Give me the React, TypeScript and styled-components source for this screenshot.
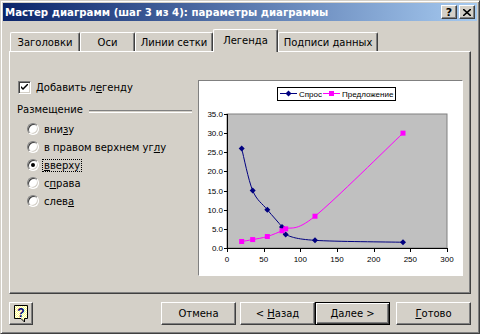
import styled, { createGlobalStyle } from "styled-components";

const Global = createGlobalStyle`
	html, body { margin: 0; padding: 0; background: #d4d0c8; }
	body { font-family: "DejaVu Sans", "Liberation Sans", sans-serif; font-size: 10px; color: #000; }
`;

const Window = styled.div`
	width: 480px;
	height: 334px;
	box-sizing: border-box;
	background: #d4d0c8;
	border: 1px solid;
	border-color: #d4d0c8 #404040 #404040 #d4d0c8;
	box-shadow: inset 1px 1px #fff, inset -1px -1px #808080;
	padding: 2px;
	display: flex;
	flex-direction: column;
`;
const TitleBar = styled.div`
	height: 18px;
	display: flex;
	align-items: center;
	padding: 0 2px 0 2px;
	background: linear-gradient(to right, #0a246a, #a6caf0);
`;
const TitleText = styled.div`
	flex: 1;
	color: #fff;
	font-weight: bold;
	font-size: 10.2px;
	white-space: nowrap;
`;
const CapBtn = styled.div<{ $gap?: number }>`
	width: 16px;
	height: 14px;
	box-sizing: border-box;
	margin-left: ${(p) => p.$gap ?? 0}px;
	background: #d4d0c8;
	border: 1px solid;
	border-color: #fff #404040 #404040 #fff;
	box-shadow: inset -1px -1px #808080;
	display: flex;
	align-items: center;
	justify-content: center;
	font-weight: bold;
	font-size: 11px;
	line-height: 1;
`;
const Body = styled.div`
	flex: 1;
	display: flex;
	flex-direction: column;
	padding: 8px 6px 0 6px;
`;
const TabStrip = styled.div`
	height: 22px;
	display: flex;
	align-items: flex-end;
	padding-left: 1px;
`;
const Tab = styled.div<{ $w: number; $active?: boolean }>`
	width: ${(p) => p.$w}px;
	height: ${(p) => (p.$active ? 23 : 19)}px;
	margin-bottom: ${(p) => (p.$active ? -1 : 0)}px;
	position: relative;
	z-index: ${(p) => (p.$active ? 1 : 0)};
	box-sizing: border-box;
	background: #d4d0c8;
	border-top: 1px solid #fff;
	border-left: 1px solid #fff;
	border-right: 1px solid #404040;
	border-radius: 2px 2px 0 0;
	box-shadow: inset -1px 0 #808080;
	display: flex;
	justify-content: center;
	padding-top: ${(p) => (p.$active ? 5 : 4)}px;
	white-space: nowrap;
`;
const Panel = styled.div`
	height: 243px;
	box-sizing: border-box;
	border: 1px solid;
	border-color: #fff #404040 #404040 #fff;
	box-shadow: inset -1px -1px #808080;
	display: flex;
	padding: 28px 0 0 7px;
	gap: 6px;
`;
const LeftCol = styled.div`
	width: 175px;
	padding-top: 1px;
	display: flex;
	flex-direction: column;
`;
const CheckRow = styled.div`
	height: 13px;
	display: flex;
	align-items: center;
	gap: 4px;
	padding-left: 1px;
`;
const CheckBox = styled.div`
	width: 13px;
	height: 13px;
	box-sizing: border-box;
	background: #fff;
	border: 1px solid;
	border-color: #808080 #fff #fff #808080;
	box-shadow: inset 1px 1px #404040, inset -1px -1px #d4d0c8;
	display: flex;
	align-items: center;
	justify-content: center;
`;
const GroupHead = styled.div`
	height: 13px;
	margin-top: 9px;
	display: flex;
	align-items: center;
	gap: 6px;
`;
const Etched = styled.div`
	flex: 1;
	height: 1px;
	margin-top: 3px;
	border-top: 1px solid #808080;
	border-bottom: 1px solid #fff;
`;
const RadioList = styled.div`
	margin-top: 4px;
	padding-left: 10px;
	display: flex;
	flex-direction: column;
`;
const RadioRow = styled.div`
	height: 18px;
	display: flex;
	align-items: center;
	gap: 4px;
`;
const Radio = styled.div<{ $on?: boolean }>`
	width: 12px;
	height: 12px;
	box-sizing: border-box;
	border-radius: 50%;
	background: #fff;
	border: 1px solid;
	border-color: #808080 #fff #fff #808080;
	box-shadow: inset 1px 1px #404040, inset -1px -1px #d4d0c8;
	display: flex;
	align-items: center;
	justify-content: center;
	&::after {
		content: "";
		display: ${(p) => (p.$on ? "block" : "none")};
		width: 4px;
		height: 4px;
		border-radius: 50%;
		background: #000;
	}
`;
const Label = styled.span<{ $focus?: boolean }>`
	white-space: pre;
	padding: 0 1px;
	outline: ${(p) => (p.$focus ? "1px dotted #000" : "none")};
	u { text-decoration: underline; text-underline-offset: 1px; }
`;
const ChartFrame = styled.div`
	width: 263px;
	height: 194px;
	border: 1px solid;
	border-color: #808080 #fff #fff #808080;
	background: #fff;
`;
const Footer = styled.div`
	display: flex;
	align-items: flex-start;
	margin-top: 8px;
`;
const Button = styled.div<{ $w?: number; $gap?: number; $default?: boolean }>`
	width: ${(p) => p.$w ?? 75}px;
	height: 23px;
	margin-left: ${(p) => p.$gap ?? 0}px;
	box-sizing: border-box;
	background: #d4d0c8;
	border: 1px solid;
	border-color: ${(p) => (p.$default ? "#000" : "#fff #404040 #404040 #fff")};
	box-shadow: ${(p) =>
		p.$default
			? "inset 1px 1px #fff, inset -1px -1px #404040, inset -2px -2px #808080"
			: "inset -1px -1px #808080"};
	display: flex;
	align-items: center;
	justify-content: center;
	white-space: pre;
	u { text-decoration: underline; text-underline-offset: 1px; }
`;
const Spacer = styled.div`
	flex: 1;
`;

// --- chart ---------------------------------------------------------------
const PX = 28, PY = 33, PW = 220, PH = 134;
const sx = (v: number) => PX + (v * PW) / 300;
const sy = (v: number) => PY + PH - (v * PH) / 35;

const demand: [number, number][] = [[20, 26], [35, 15], [55, 10], [75, 5.5], [80, 3.5], [120, 2], [240, 1.5]];
const supply: [number, number][] = [[20, 1.7], [35, 2.2], [55, 3], [75, 4.5], [80, 5], [120, 8.3], [240, 30]];

const smooth = (data: [number, number][]) => {
	const p = data.map(([x, y]) => [sx(x), sy(y)]);
	let d = `M${p[0][0]},${p[0][1]}`;
	for (let i = 0; i < p.length - 1; i++) {
		const a = p[i - 1] || p[i];
		const b = p[i];
		const c = p[i + 1];
		const e = p[i + 2] || c;
		const t = 1 / 6;
		d += ` C${b[0] + (c[0] - a[0]) * t},${b[1] + (c[1] - a[1]) * t} ${c[0] - (e[0] - b[0]) * t},${c[1] - (e[1] - b[1]) * t} ${c[0]},${c[1]}`;
	}
	return d;
};

const NAVY = "#000080";
const PINK = "#ff00ff";

const Diamond = ({ x, y }: { x: number; y: number }) => (
	<polygon points={`${x},${y - 3} ${x + 3},${y} ${x},${y + 3} ${x - 3},${y}`} fill={NAVY} />
);
const Square = ({ x, y }: { x: number; y: number }) => (
	<rect x={x - 2.5} y={y - 2.5} width={5} height={5} fill={PINK} />
);

const Chart = () => (
	<svg width={263} height={194} style={{ display: "block" }} fontFamily="Liberation Sans, sans-serif" fontSize={8}>
		<rect x={78.5} y={6.5} width={118} height={13} fill="#fff" stroke="#000" />
		<line x1={81} x2={98} y1={12.5} y2={12.5} stroke={NAVY} />
		<Diamond x={89.5} y={12.5} />
		<text x={100} y={15.5}>Спрос</text>
		<line x1={124} x2={141} y1={12.5} y2={12.5} stroke={PINK} />
		<Square x={132.5} y={12.5} />
		<text x={143} y={15.5}>Предложение</text>

		<rect x={PX} y={PY} width={PW} height={PH} fill="#c0c0c0" stroke="#808080" />
		<line x1={PX + 0.5} x2={PX + 0.5} y1={PY} y2={PY + PH + 0.5} stroke="#000" />
		<line x1={PX} x2={PX + PW + 0.5} y1={PY + PH + 0.5} y2={PY + PH + 0.5} stroke="#000" />
		{[0, 5, 10, 15, 20, 25, 30, 35].map((v) => (
			<g key={v}>
				<line x1={PX - 3} x2={PX} y1={Math.round(sy(v)) + 0.5} y2={Math.round(sy(v)) + 0.5} stroke="#000" />
				<text x={24} y={Math.round(sy(v)) + 3} textAnchor="end">{v.toFixed(1)}</text>
			</g>
		))}
		{[0, 50, 100, 150, 200, 250, 300].map((v) => (
			<g key={v}>
				<line x1={Math.round(sx(v)) + 0.5} x2={Math.round(sx(v)) + 0.5} y1={PY + PH} y2={PY + PH + 4} stroke="#000" />
				<text x={sx(v)} y={181} textAnchor="middle">{v}</text>
			</g>
		))}
		<path d={smooth(demand)} fill="none" stroke={NAVY} />
		<path d={smooth(supply)} fill="none" stroke={PINK} />
		{demand.map(([x, y]) => <Diamond key={x} x={sx(x)} y={sy(y)} />)}
		{supply.map(([x, y]) => <Square key={x} x={sx(x)} y={sy(y)} />)}
	</svg>
);

const HelpIcon = () => (
	<svg width={14} height={18} viewBox="0 0 14 18">
		<defs>
			<pattern id="dots" width={2} height={2} patternUnits="userSpaceOnUse">
				<rect width={2} height={2} fill="#ffff80" />
				<rect width={1} height={1} fill="#fff" />
				<rect x={1} y={1} width={1} height={1} fill="#fff" />
			</pattern>
		</defs>
		<path d="M0.5,0.5 H13.5 V13.5 H10.5 L10.5,17 L7,13.5 H0.5 Z" fill="url(#dots)" stroke="#000" />
		<text x={7} y={11.5} textAnchor="middle" fontWeight="bold" fontSize={12} fill={NAVY} fontFamily="Liberation Sans, sans-serif">?</text>
	</svg>
);

const tabs = [
	{ t: "Заголовки", w: 70 },
	{ t: "Оси", w: 55 },
	{ t: "Линии сетки", w: 78 },
	{ t: "Легенда", w: 65, active: true },
	{ t: "Подписи данных", w: 100 },
];

const App = () => (
	<>
		<Global />
		<Window>
			<TitleBar>
				<TitleText>Мастер диаграмм (шаг 3 из 4): параметры диаграммы</TitleText>
				<CapBtn>?</CapBtn>
				<CapBtn $gap={2}>
					<svg width={8} height={7} viewBox="0 0 8 7">
						<path d="M0,0 L8,7 M8,0 L0,7" stroke="#000" strokeWidth={1.6} />
					</svg>
				</CapBtn>
			</TitleBar>
			<Body>
				<TabStrip>
					{tabs.map((x) => (
						<Tab key={x.t} $w={x.w} $active={x.active}>{x.t}</Tab>
					))}
				</TabStrip>
				<Panel>
					<LeftCol>
						<CheckRow>
							<CheckBox>
								<svg width={7} height={7} viewBox="0 0 7 7">
									<path d="M0,2 L0,4 L2,6 L7,1 L7,-1 L2,4 Z" fill="#000" />
								</svg>
							</CheckBox>
							<Label>Добавить л<u>е</u>генду</Label>
						</CheckRow>
						<GroupHead>
							<span>Размещение</span>
							<Etched />
						</GroupHead>
						<RadioList>
							<RadioRow><Radio /><Label>вни<u>з</u>у</Label></RadioRow>
							<RadioRow><Radio /><Label>в правом верхнем уг<u>л</u>у</Label></RadioRow>
							<RadioRow><Radio $on /><Label $focus><u>в</u>верху</Label></RadioRow>
							<RadioRow><Radio /><Label>с<u>п</u>рава</Label></RadioRow>
							<RadioRow><Radio /><Label>слев<u>а</u></Label></RadioRow>
						</RadioList>
					</LeftCol>
					<ChartFrame>
						<Chart />
					</ChartFrame>
				</Panel>
				<Footer>
					<Button $w={24}><HelpIcon /></Button>
					<Spacer />
					<Button>Отмена</Button>
					<Button $gap={4}>{"< "}<u>Н</u>азад</Button>
					<Button $default><u>Д</u>алее{" >"}</Button>
					<Button $gap={6}><u>Г</u>отово</Button>
				</Footer>
			</Body>
		</Window>
	</>
);

export default App;
